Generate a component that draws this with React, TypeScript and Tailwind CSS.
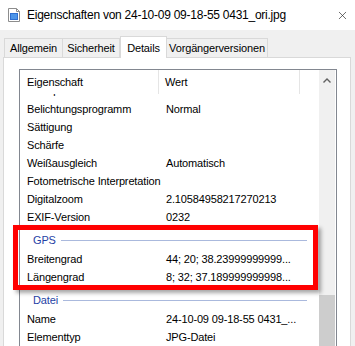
import { X } from 'lucide-react'

const rows: [string, string][] = [
  ['Belichtungsprogramm', 'Normal'],
  ['Sättigung', ''],
  ['Schärfe', ''],
  ['Weißausgleich', 'Automatisch'],
  ['Fotometrische Interpretation', ''],
  ['Digitalzoom', '2.10584958217270213'],
  ['EXIF-Version', '0232'],
]

function Row({ name, value }: { name: string; value: string }) {
  return (
    <div className="flex h-[18px] items-center whitespace-nowrap text-black">
      <div className="w-[139px] pl-[7px]">{name}</div>
      <div className="pl-[7px]">{value}</div>
    </div>
  )
}

function Group({ label }: { label: string }) {
  return (
    <div className="flex h-[24px] items-center pt-[4px] pl-[13px] pr-[12px] text-[#1f3fa5]">
      <span>{label}</span>
      <div className="ml-[5px] h-px flex-1 bg-[#aab9dd]" />
    </div>
  )
}

function FileIcon() {
  return (
    <svg width="14" height="14" viewBox="0 0 14 14">
      <path d="M1.5 0.5h8l3 3v10h-11z" fill="#fff" stroke="#8d8d8d" />
      <path d="M9.5 0.5v3h3" fill="none" stroke="#8d8d8d" />
      <rect x="3" y="5" width="8" height="7" fill="#2f6fd0" />
      <rect x="4" y="6" width="6" height="5" fill="#4d95e8" />
    </svg>
  )
}

const tabs = [
  { label: 'Allgemein', w: 'w-[59px]' },
  { label: 'Sicherheit', w: 'w-[58px]' },
  { label: 'Details', w: 'w-[47px]', active: true },
  { label: 'Vorgängerversionen', w: 'w-[102px]' },
]

export default function App() {
  return (
    <div className="relative h-[346px] w-[355px] overflow-hidden bg-[#f0f0f0] font-['Liberation_Sans',Arial,sans-serif] text-[11px] tracking-[-0.15px]">
      <div className="flex h-[30px] items-center bg-white pl-[7px] text-[12px] tracking-[-0.25px] text-black">
        <FileIcon />
        <span className="ml-[6px] whitespace-nowrap">Eigenschaften von 24-10-09 09-18-55 0431_ori.jpg</span>
        <X className="ml-auto mr-[6px] h-[13px] w-[13px] text-[#222]" strokeWidth={1.2} />
      </div>

      <div className="mt-[5px] flex h-[22px] items-end pl-[4px]">
        {tabs.map((t) =>
          t.active ? (
            <div key={t.label} className={`${t.w} relative z-10 -mb-px flex h-[22px] items-start justify-center border border-b-0 border-[#d9d9d9] bg-white pt-[3px] text-black`}>
              {t.label}
            </div>
          ) : (
            <div key={t.label} className={`${t.w} -ml-px flex h-[19px] items-center justify-center border border-b-0 border-[#d9d9d9] bg-[#f0f0f0] text-black first:ml-0`}>
              {t.label}
            </div>
          ),
        )}
      </div>

      <div className="ml-[3px] h-[300px] w-[348px] border border-[#d9d9d9] bg-white pl-[15px] pt-[11px]">
        <div className="flex h-[300px] w-[318px] border border-[#828790] bg-white">
          <div className="flex w-[299px] flex-col">
            <div className="flex h-[24px] items-center whitespace-nowrap bg-white text-black">
              <div className="flex h-full w-[139px] items-center border-r border-[#e5e5e5] pl-[7px]">Eigenschaft</div>
              <div className="flex h-full w-[141px] items-center border-r border-[#e5e5e5] pl-[6px]">Wert</div>
            </div>
            <div className="flex-1 overflow-hidden">
              <div className="-mt-[13px]">
                <Row name="Lichtquelle" value="" />
                <div className="h-px" />
                {rows.map(([n, v]) => (
                  <Row key={n} name={n} value={v} />
                ))}
                <Group label="GPS" />
                <Row name="Breitengrad" value="44; 20; 38.23999999999..." />
                <Row name="Längengrad" value="8; 32; 37.189999999998..." />
                <Group label="Datei" />
                <Row name="Name" value="24-10-09 09-18-55 0431_..." />
                <Row name="Elementtyp" value="JPG-Datei" />
              </div>
            </div>
          </div>
          <div className="flex w-[16px] flex-col bg-[#f0f0f0]">
            <div className="flex h-[22px] items-center justify-center">
              <svg width="8" height="5" viewBox="0 0 8 5">
                <path d="M0.5 4.5L4 1L7.5 4.5" fill="none" stroke="#606060" strokeWidth="1.4" />
              </svg>
            </div>
            <div className="mt-[205px] h-[80px] bg-[#cdcdcd]" />
          </div>
        </div>
      </div>

      <div className="absolute left-[13px] top-[225px] h-[65px] w-[305px] border-[5px] border-[#ff0000] shadow-[3px_3px_4px_rgba(0,0,0,0.35)]" />
    </div>
  )
}
